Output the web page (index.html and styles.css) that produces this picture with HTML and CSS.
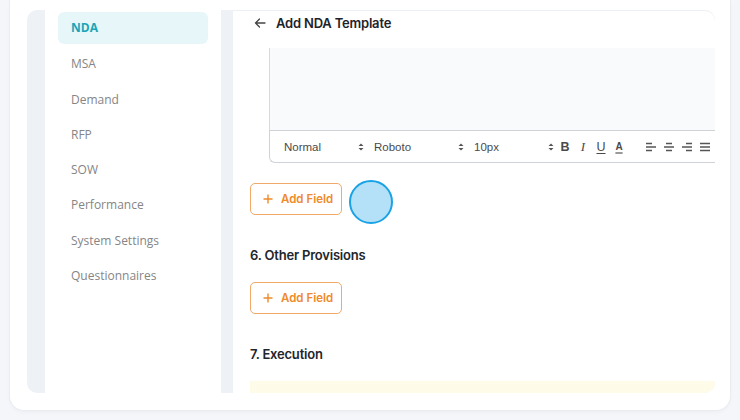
FILE: index.html
```html
<!DOCTYPE html>
<html>
<head>
<meta charset="utf-8">
<link rel="stylesheet" href="styles.css">
</head>
<body>
<div class="shell">
  <div class="panel">
    <aside class="sidebar">
      <div class="menu-item active">NDA</div>
      <div class="menu-item">MSA</div>
      <div class="menu-item">Demand</div>
      <div class="menu-item">RFP</div>
      <div class="menu-item">SOW</div>
      <div class="menu-item">Performance</div>
      <div class="menu-item">System Settings</div>
      <div class="menu-item">Questionnaires</div>
    </aside>
    <main class="content">
      <div class="header">
        <svg class="back" width="12" height="12" viewBox="0 0 12 12"><path d="M11 6H1.5M5.5 2L1.5 6l4 4" fill="none" stroke="#444" stroke-width="1.3" stroke-linecap="round" stroke-linejoin="round"/></svg>
        <span class="title">Add NDA Template</span>
      </div>
      <div class="editor">
        <div class="editor-body"></div>
        <div class="toolbar">
          <div class="picker p1"><span>Normal</span><svg class="updown" width="6" height="8" viewBox="0 0 6 8"><path d="M3 0.5L5.5 3H0.5z M3 7.5L5.5 5H0.5z" fill="#555"/></svg></div>
          <div class="picker p2"><span>Roboto</span><svg class="updown" width="6" height="8" viewBox="0 0 6 8"><path d="M3 0.5L5.5 3H0.5z M3 7.5L5.5 5H0.5z" fill="#555"/></svg></div>
          <div class="picker p3"><span>10px</span><svg class="updown" width="6" height="8" viewBox="0 0 6 8"><path d="M3 0.5L5.5 3H0.5z M3 7.5L5.5 5H0.5z" fill="#555"/></svg></div>
          <span class="tb tb-b">B</span>
          <span class="tb tb-i">I</span>
          <span class="tb tb-u">U</span>
          <span class="tb tb-a">A</span>
          <span class="align-group">
            <svg class="al" width="12" height="10" viewBox="0 0 12 10"><path d="M1 1.5h6M1 5h10M1 8.5h6" stroke="#555" stroke-width="1.4"/></svg>
            <svg class="al" width="12" height="10" viewBox="0 0 12 10"><path d="M3 1.5h6M1 5h10M3 8.5h6" stroke="#555" stroke-width="1.4"/></svg>
            <svg class="al" width="12" height="10" viewBox="0 0 12 10"><path d="M5 1.5h6M1 5h10M5 8.5h6" stroke="#555" stroke-width="1.4"/></svg>
            <svg class="al" width="12" height="10" viewBox="0 0 12 10"><path d="M1 1.5h10M1 5h10M1 8.5h10" stroke="#555" stroke-width="1.4"/></svg>
          </span>
        </div>
      </div>
      <button class="add-field first"><svg width="10" height="10" viewBox="0 0 10 10"><path d="M5 0.5v9M0.5 5h9" stroke="#f08a2a" stroke-width="1.4"/></svg><span>Add Field</span></button>
      <h3 class="section">6. Other Provisions</h3>
      <button class="add-field"><svg width="10" height="10" viewBox="0 0 10 10"><path d="M5 0.5v9M0.5 5h9" stroke="#f08a2a" stroke-width="1.4"/></svg><span>Add Field</span></button>
      <h3 class="section">7. Execution</h3>
      <div class="notice"></div>
    </main>
  </div>
  <div class="click-dot"></div>
</div>
</body>
</html>
```

FILE: styles.css
```css
html, body {
  margin: 0;
  padding: 0;
}
body {
  background: #f4f6f9;
  width: 740px;
  height: 420px;
  overflow: hidden;
  font-family: "Open Sans", "Noto Sans", sans-serif;
}
.shell {
  position: relative;
  margin: 0 10px;
  width: 720px;
  height: 410px;
  box-sizing: border-box;
  background: #fff;
  border-radius: 0 0 14px 14px;
  box-shadow: 0 0 0 1px #e9ecf1, 0 2px 4px rgba(20, 30, 50, 0.04);
  padding: 10px 15px 17px 17px;
}
.panel {
  display: flex;
  gap: 12px;
  height: 383px;
  background: #eef2f6;
  border-radius: 10px;
  overflow: hidden;
  padding-left: 18px;
}
.sidebar {
  width: 176px;
  flex-shrink: 0;
  background: #fff;
  box-sizing: border-box;
  padding: 2px 13px;
}
.menu-item {
  height: 32px;
  line-height: 32px;
  padding: 0 13px;
  margin-bottom: 3.3px;
  border-radius: 6px;
  font-size: 12px;
  color: #858585;
}
.menu-item + .menu-item {
  line-height: 34px;
  height: 32px;
}
.menu-item.active {
  background: #e7f7f9;
  color: #1aa5b7;
  font-weight: 700;
}
.content {
  flex: 1;
  min-width: 0;
  background: #fff;
  border-top-right-radius: 10px;
  box-shadow: inset 0 1px 0 #eceff3;
  overflow: hidden;
  padding-left: 17px;
  font-family: Inter, "Noto Sans", sans-serif;
}
.header {
  height: 38px;
  display: flex;
  align-items: flex-start;
  padding-top: 4px;
  box-sizing: border-box;
}
.back {
  margin: 3px 0 0 4px;
}
.title {
  margin-left: 10px;
  font-size: 13px;
  font-weight: 600;
  line-height: 18px;
  letter-spacing: -0.2px;
  color: #1f2329;
}
.editor {
  margin-left: 19px;
  width: 480px;
}
.editor-body {
  height: 82px;
  background: #f8fafc;
  border-left: 1px solid #d6d9dd;
}
.toolbar {
  height: 33px;
  box-sizing: border-box;
  border: 1px solid #cfd3d8;
  border-right: none;
  border-radius: 0 0 0 6px;
  display: flex;
  align-items: center;
  padding-left: 14px;
  font-family: "Liberation Sans", Arial, sans-serif;
  font-size: 11.5px;
  color: #4a4a4a;
  background: #fff;
}
.picker {
  display: flex;
  align-items: center;
  justify-content: space-between;
  margin-right: 10px;
}
.p1 { width: 80px; }
.p2 { width: 90px; }
.p3 { width: 80px; margin-right: 2px; }
.tb {
  width: 18px;
  text-align: center;
  font-size: 12.5px;
  color: #4a4a4a;
}
.tb-b {
  font-weight: 700;
}
.tb-i {
  font-family: "Liberation Serif", serif;
  font-style: italic;
  font-size: 13px;
}
.tb-u {
  text-decoration: underline;
  text-underline-offset: 2px;
}
.tb-a {
  font-size: 10px;
  font-weight: 700;
  text-decoration: underline;
  text-decoration-color: #9a9a9a;
  text-decoration-thickness: 2px;
  text-underline-offset: 2px;
}
.align-group {
  display: flex;
  gap: 6px;
  margin-left: 17px;
}
.add-field {
  display: flex;
  align-items: center;
  width: 92px;
  height: 32px;
  box-sizing: border-box;
  margin: 0;
  padding: 0 0 0 12px;
  background: #fff;
  border: 1px solid #f1a969;
  border-radius: 5px;
  color: #f08a2a;
  font-family: Inter, "Noto Sans", sans-serif;
  font-size: 11.5px;
  font-weight: 600;
  cursor: pointer;
}
.add-field span {
  margin-left: 8px;
}
.add-field.first {
  margin-top: 20px;
}
.section {
  margin: 31px 0 18px;
  font-size: 13px;
  font-weight: 600;
  line-height: 18px;
  letter-spacing: -0.2px;
  color: #23262b;
}
.notice {
  height: 40px;
  background: #fefbe8;
  border-radius: 0 0 10px 0;
}
.click-dot {
  position: absolute;
  left: 339px;
  top: 180px;
  width: 40px;
  height: 40px;
  border-radius: 50%;
  background: #b4e1f7;
  border: 2px solid #1aa2e6;
}
```
